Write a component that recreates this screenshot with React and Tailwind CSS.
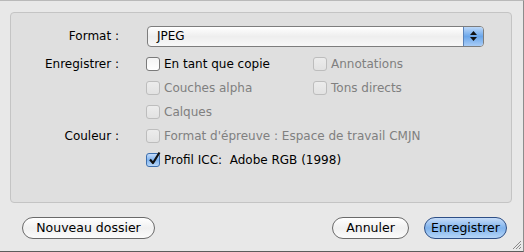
import React from 'react';

const font = { fontFamily: '"DejaVu Sans", "Liberation Sans", sans-serif' };

function Checkbox({ label, checked = false, disabled = false }) {
  return (
    <div className="flex items-center h-[24px]">
      <span
        className={
          'relative w-[14px] h-[14px] rounded-[3px] border shrink-0 ' +
          (checked
            ? 'border-[#3d6fae] bg-gradient-to-b from-[#c4dcfa] via-[#7fb3ee] to-[#b9d8f9]'
            : disabled
            ? 'border-[#bdbdbd] bg-gradient-to-b from-[#ececec] to-[#e2e2e2]'
            : 'border-[#7a7a7a] bg-gradient-to-b from-[#f4f4f4] to-[#ffffff]')
        }
      >
        {checked && (
          <svg className="absolute left-[1px] top-[-3px]" width="14" height="15" viewBox="0 0 14 15">
            <path d="M2 8.5 L5 12 L11.5 1.5" fill="none" stroke="#111" strokeWidth="2.2" strokeLinejoin="round" />
          </svg>
        )}
      </span>
      <span className={'ml-[4px] whitespace-pre ' + (disabled ? 'text-[#808080]' : 'text-black')}>{label}</span>
    </div>
  );
}

function Row({ label, children }) {
  return (
    <div className="flex">
      <div className="w-[108px] shrink-0 text-right h-[24px] leading-[24px] text-black whitespace-nowrap">{label}</div>
      <div className="ml-[28px] flex-1">{children}</div>
    </div>
  );
}

function AquaButton({ children, primary = false, className = '' }) {
  return (
    <button
      type="button"
      className={
        'h-[22px] rounded-full border leading-[20px] text-[12.5px] text-black whitespace-nowrap text-center ' +
        (primary
          ? 'border-[#2e4f86] bg-gradient-to-b from-[#c6dcf8] via-[#7fb2ec] to-[#b6d6f8]'
          : 'border-[#6a6a6a] bg-gradient-to-b from-[#ffffff] via-[#f0f0f0] to-[#fbfbfb]') +
        ' ' + className
      }
      style={font}
    >
      {children}
    </button>
  );
}

export default function App() {
  return (
    <div
      className="w-[524px] h-[252px] bg-[#e8e8e8] border-t border-t-[#b9b9b9] border-r border-r-[#8c8c8c] border-b border-b-[#5c5c5c] relative text-[12px] flex flex-col"
      style={font}
    >
      {/* groupe d'options */}
      <div className="ml-[10px] mt-[11px] w-[502px] h-[191px] rounded-[4px] border border-[#c4c4c4] bg-[#dfdfdf] pt-[12px] shrink-0">
        <div className="flex items-center h-[22px]">
          <div className="w-[108px] text-right">Format :</div>
          <div className="ml-[28px] w-[337px] h-[21px] rounded-[4px] border border-[#7d7d7d] bg-gradient-to-b from-[#ffffff] via-[#eeeeee] to-[#f8f8f8] flex items-center overflow-hidden">
            <span className="pl-[9px] flex-1 leading-[19px]">JPEG</span>
            <span className="w-[20px] h-full bg-gradient-to-b from-[#bcd8f8] via-[#6aa6ea] to-[#a8ccf6] border-l border-l-[#5b83b9] flex flex-col items-center justify-center gap-[2px]">
              <svg width="7" height="4" viewBox="0 0 7 4"><path d="M0 4 L3.5 0 L7 4 Z" fill="#111" /></svg>
              <svg width="7" height="4" viewBox="0 0 7 4"><path d="M0 0 L3.5 4 L7 0 Z" fill="#111" /></svg>
            </span>
          </div>
        </div>
        <div className="mt-[5px]">
          <Row label="Enregistrer :">
            <div className="flex -ml-[1px]">
              <div className="w-[167px]">
                <Checkbox label="En tant que copie" />
                <Checkbox label="Couches alpha" disabled />
                <Checkbox label="Calques" disabled />
              </div>
              <div>
                <Checkbox label="Annotations" disabled />
                <Checkbox label="Tons directs" disabled />
              </div>
            </div>
          </Row>
          <Row label="Couleur :">
            <div className="-ml-[1px]">
              <Checkbox label="Format d'épreuve : Espace de travail CMJN" disabled />
              <Checkbox label="Profil ICC:  Adobe RGB (1998)" checked />
            </div>
          </Row>
        </div>
      </div>

      {/* boutons */}
      <div className="flex items-center mt-[14px] pl-[22px] pr-[16px]">
        <AquaButton className="w-[133px]">Nouveau dossier</AquaButton>
        <div className="flex-1" />
        <AquaButton className="w-[77px]">Annuler</AquaButton>
        <AquaButton primary className="ml-[15px] w-[83px]">Enregistrer</AquaButton>
      </div>

      {/* poignée de redimensionnement */}
      <svg className="absolute right-[1px] bottom-[1px]" width="11" height="11" viewBox="0 0 11 11">
        <path d="M10 2 L2 10 M10 5 L5 10 M10 8 L8 10" stroke="#8a8a8a" strokeWidth="1" />
      </svg>
    </div>
  );
}
